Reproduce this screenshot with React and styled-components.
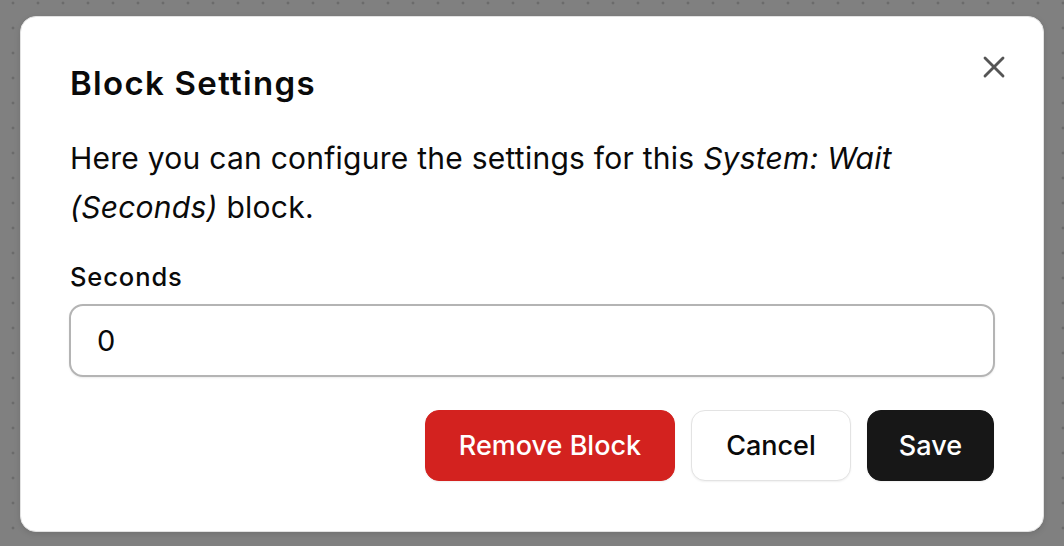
import React from "react";
import styled, { createGlobalStyle } from "styled-components";

const Global = createGlobalStyle`
  html, body { margin: 0; padding: 0; }
  body {
    width: 1064px;
    height: 546px;
    overflow: hidden;
    background-color: #808080;
    background-image: radial-gradient(circle, #5e5e5e 0.9px, transparent 1.3px);
    background-size: 25px 25px;
    background-position: 0.5px -9.5px;
    font-family: Inter, "Noto Sans", "Liberation Sans", sans-serif;
    color: #0a0a0a;
  }
`;

const Stage = styled.div`
  box-sizing: border-box;
  padding: 16px 0 0 20px;
`;

const Dialog = styled.div`
  position: relative;
  box-sizing: border-box;
  width: 1024px;
  height: 516px;
  background: #ffffff;
  border: 1px solid #e2e2e2;
  border-radius: 16px;
  box-shadow: 0 2px 6px rgba(0, 0, 0, 0.12);
  padding: 42px 49px 0 49px;
  display: flex;
  flex-direction: column;
`;

const CloseButton = styled.button`
  position: absolute;
  top: 32px;
  right: 31px;
  width: 36px;
  height: 36px;
  padding: 0;
  border: none;
  background: transparent;
  color: #555555;
  display: flex;
  align-items: center;
  justify-content: center;
`;

const Title = styled.h2`
  margin: 0;
  font-size: 33px;
  line-height: 49px;
  font-weight: 600;
  letter-spacing: 1.3px;
`;

const Description = styled.p`
  margin: 26px 0 0 0;
  font-size: 30px;
  line-height: 49px;
  font-weight: 400;
  letter-spacing: 0.25px;
  width: 860px;
  em { font-style: italic; }
`;

const Field = styled.div`
  margin-top: 30px;
  display: flex;
  flex-direction: column;
  gap: 12px;
`;

const Label = styled.label`
  font-size: 25.5px;
  line-height: 30px;
  font-weight: 500;
  letter-spacing: 0.9px;
`;

const Input = styled.input`
  box-sizing: border-box;
  width: calc(100% + 2px);
  height: 73px;
  margin-left: -1px;
  border: 2px solid #b4b4b4;
  border-radius: 14px;
  padding: 0 26px;
  font-family: inherit;
  font-size: 29px;
  color: #0a0a0a;
  background: #fff;
  outline: none;
  box-shadow: 0 1px 2px rgba(0, 0, 0, 0.08);
`;

const Footer = styled.div`
  margin-top: 33px;
  display: flex;
  justify-content: flex-end;
  gap: 16px;
`;

const variants = {
  danger: "background:#d3221f;color:#fff;border:1px solid #d3221f;padding:0 33px;",
  outline: "background:#fff;color:#0a0a0a;border:1px solid #e3e3e3;padding:0 34px;",
  primary: "background:#171717;color:#fff;border:1px solid #171717;padding:0 31px;",
};

const Button = styled.button`
  box-sizing: border-box;
  height: 71px;
  border-radius: 14px;
  font-family: inherit;
  font-size: 27px;
  font-weight: 500;
  cursor: pointer;
  box-shadow: 0 1px 2px rgba(0, 0, 0, 0.06);
  ${(p) => variants[p.$variant]}
`;

export default function App() {
  return (
    <>
      <Global />
      <Stage>
        <Dialog>
          <CloseButton aria-label="Close">
            <svg width="36" height="36" viewBox="0 0 24 24" fill="none" stroke="currentColor" strokeWidth="1.9" strokeLinecap="round" strokeLinejoin="round">
              <path d="M18 6 6 18" />
              <path d="m6 6 12 12" />
            </svg>
          </CloseButton>
          <Title>Block Settings</Title>
          <Description>
            Here you can configure the settings for this <em>System: Wait (Seconds)</em> block.
          </Description>
          <Field>
            <Label>Seconds</Label>
            <Input defaultValue="0" />
          </Field>
          <Footer>
            <Button $variant="danger">Remove Block</Button>
            <Button $variant="outline">Cancel</Button>
            <Button $variant="primary">Save</Button>
          </Footer>
        </Dialog>
      </Stage>
    </>
  );
}
